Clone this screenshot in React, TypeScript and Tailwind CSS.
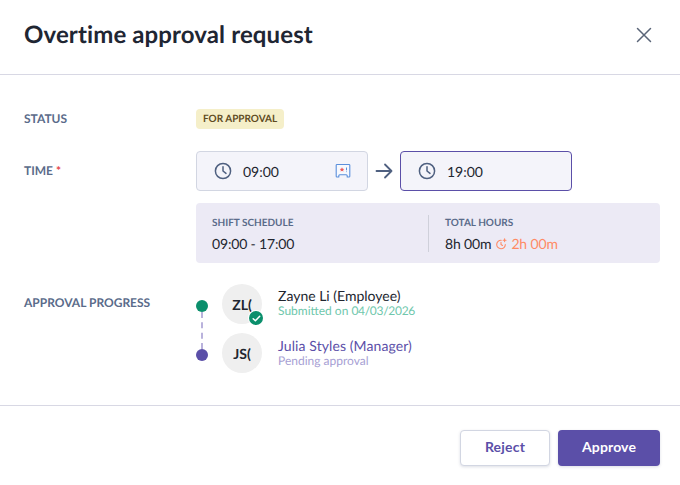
import React from "react";

function Clock() {
  return (
    <svg width="18" height="18" viewBox="0 0 18 18" fill="none" stroke="#4f6080" strokeWidth="1.5" strokeLinecap="round" strokeLinejoin="round">
      <circle cx="9" cy="9" r="7.6" />
      <path d="M9 4.800V9l3 2.400" />
    </svg>
  );
}

function FlagIcon() {
  return (
    <svg width="16" height="16" viewBox="0 0 16 16" fill="none">
      <path d="M2 1.500h12a.8.8 0 0 1 .8.8v10.900a.8.8 0 0 1-.8.800h-1.800v-1.300a1 1 0 0 0-1-1H4.800a1 1 0 0 0-1 1v1.300H2a.8.8 0 0 1-.8-.8V2.300A.8.800 0 0 1 2 1.500z" fill="#f7f9fe" stroke="#5b8fdc" strokeWidth="1.100" strokeLinejoin="round" />
      <path d="M7 4.300l.7 1.500 1.600.1-1.200 1.100.4 1.600L7 7.800l-1.500.8.400-1.600L4.700 5.900l1.600-.1z" fill="#ee5a5a" />
      <path d="M11.500 4.500v2.800M11.500 8.500v.6" stroke="#5b8fdc" strokeWidth="1" />
    </svg>
  );
}

function OvertimeIcon() {
  return (
    <svg width="12" height="12" viewBox="0 0 12 12" fill="none" stroke="#ff8a65" strokeWidth="1.100" strokeLinecap="round">
      <path d="M6.200 2.200a4.300 4.300 0 1 0 4.100 4.300" />
      <path d="M6 4.200v2.300l1.500 1" />
      <path d="M9.600.8v2.800M8.200 2.200H11" />
    </svg>
  );
}

function TimeField({ value, active, flag }: { value: string; active?: boolean; flag?: boolean }) {
  return (
    <div
      className={
        "flex h-10 w-[172px] items-center rounded-[4px] border bg-[#f4f4fa] pl-[17px] pr-[16px] " +
        (active ? "border-[#5b4fa8]" : "border-[#d2d6e2]")
      }
    >
      <Clock />
      <span className="ml-[11px] flex-1 text-[14px] text-[#22262f]">{value}</span>
      {flag && <FlagIcon />}
    </div>
  );
}

function Label({ children }: { children: React.ReactNode }) {
  return <div className="w-[172px] shrink-0 text-[12px] font-bold leading-4 text-[#5a6b8a]">{children}</div>;
}

export default function App() {
  return (
    <div className="flex h-[485px] w-[680px] flex-col bg-white font-['Lato',sans-serif] [text-rendering:geometricPrecision]">
      <header className="flex h-[75px] shrink-0 items-center justify-between border-b border-[#d8d8e4] pb-[5px] pl-6 pr-[28px]">
        <h1 className="text-[24px] font-bold tracking-[0.12px] text-[#1f2633]">Overtime approval request</h1>
        <svg width="16" height="16" viewBox="0 0 16 16" fill="none" stroke="#5a6578" strokeWidth="1.500" strokeLinecap="round">
          <path d="M1.500 1.500l13 13M14.500 1.500l-13 13" />
        </svg>
      </header>

      <main className="flex-1 pl-6 pr-5 pt-[34px]">
        <div className="flex items-center">
          <Label>STATUS</Label>
          <span className="flex h-5 items-center rounded-[4px] bg-[#f5efc9] px-[7px] text-[10px] font-bold text-[#5f4b1f]">
            FOR APPROVAL
          </span>
        </div>

        <div className="mt-[22px] flex">
          <div className="w-[172px] shrink-0 pt-[12px] text-[12px] font-bold leading-4 text-[#5a6b8a]">
            TIME <span className="text-[#e5484d]">*</span>
          </div>
          <div className="flex-1">
            <div className="flex items-center">
              <TimeField value="09:00" flag />
              <div className="flex w-8 justify-center">
                <svg width="18" height="16" viewBox="0 0 18 16" fill="none" stroke="#4f6080" strokeWidth="1.800" strokeLinecap="round" strokeLinejoin="round">
                  <path d="M1.500 8h15M10 1.500L16.500 8 10 14.500" />
                </svg>
              </div>
              <TimeField value="19:00" active />
            </div>
            <div className="mt-3 flex h-[60px] items-center rounded-[4px] bg-[#eceaf5] pl-4">
              <div className="w-[216px] shrink-0 pt-[2px]">
                <div className="text-[10px] font-bold leading-4 text-[#5a6b8a]">SHIFT SCHEDULE</div>
                <div className="mt-[3px] text-[14px] leading-5 tracking-[-0.16px] text-[#22262f]">09:00 - 17:00</div>
              </div>
              <div className="h-[37px] border-l border-[#cfd0da] pl-4">
                <div className="mt-[2px] text-[10px] font-bold leading-[12px] text-[#5a6b8a]">TOTAL HOURS</div>
                <div className="mt-[5px] flex items-center text-[14px] leading-5 tracking-[-0.15px] text-[#22262f]">
                  8h 00m
                  <span className="ml-[4px] mr-[4px]"><OvertimeIcon /></span>
                  <span className="text-[#ff8a65]">2h 00m</span>
                </div>
              </div>
            </div>
          </div>
        </div>

        <div className="mt-[21px] flex">
          <div className="w-[172px] shrink-0 pt-[11px] text-[12px] font-bold leading-4 text-[#5a6b8a]">APPROVAL PROGRESS</div>
          <div className="flex">
            <div className="flex w-[12px] flex-col items-center pt-[16px]">
              <div className="h-3 w-3 rounded-full bg-[#0b8f6c]" />
              <div className="h-[37px] border-l-2 border-dashed border-[#b9b2dc]" />
              <div className="h-3 w-3 rounded-full bg-[#5b4fa8]" />
            </div>
            <div className="ml-[14px] flex flex-col gap-[9px]">
              <div className="flex items-center">
                <div className="relative flex h-10 w-10 items-center justify-center rounded-full bg-[#efefef] text-[14px] font-bold text-[#22262f]">
                  ZL(
                  <span className="absolute bottom-[-1px] right-[-1px] flex h-[14px] w-[14px] items-center justify-center rounded-full bg-[#0b8f6c] ring-1 ring-white">
                    <svg width="9" height="9" viewBox="0 0 9 9" fill="none" stroke="white" strokeWidth="1.500" strokeLinecap="round" strokeLinejoin="round">
                      <path d="M1.200 4.700l2.200 2.100 4.300-4.500" />
                    </svg>
                  </span>
                </div>
                <div className="ml-4 pb-[4px]">
                  <div className="text-[14px] leading-[17px] text-[#22262f]">Zayne Li (Employee)</div>
                  <div className="text-[12px] leading-[13px] text-[#6fc7ac]">
                    Submitted on <span className="tracking-[-0.3px]">04/03/2026</span>
                  </div>
                </div>
              </div>
              <div className="flex items-center">
                <div className="flex h-10 w-10 items-center justify-center rounded-full bg-[#efefef] text-[14px] font-bold text-[#22262f]">
                  JS(
                </div>
                <div className="ml-4 pb-[2px]">
                  <div className="text-[14px] leading-[17px] tracking-[0.09px] text-[#5b4fa8]">Julia Styles (Manager)</div>
                  <div className="text-[12px] leading-[13px] text-[#a79fd4]">Pending approval</div>
                </div>
              </div>
            </div>
          </div>
        </div>
      </main>

      <footer className="flex h-[80px] shrink-0 items-start justify-end gap-2 border-t border-[#d8d8e4] pr-5 pt-6">
        <button className="h-9 w-[90px] rounded-[4px] border border-[#d2d6e2] bg-white pb-[3px] text-[14px] font-bold tracking-[0.2px] text-[#5b4fa8] shadow-[0_1px_3px_rgba(60,70,110,0.18)]">
          Reject
        </button>
        <button className="h-9 w-[102px] rounded-[4px] bg-[#5b4fa8] pb-[3px] text-[14px] font-bold tracking-[0.15px] text-white shadow-[0_1px_3px_rgba(60,70,110,0.18)]">
          Approve
        </button>
      </footer>
    </div>
  );
}
